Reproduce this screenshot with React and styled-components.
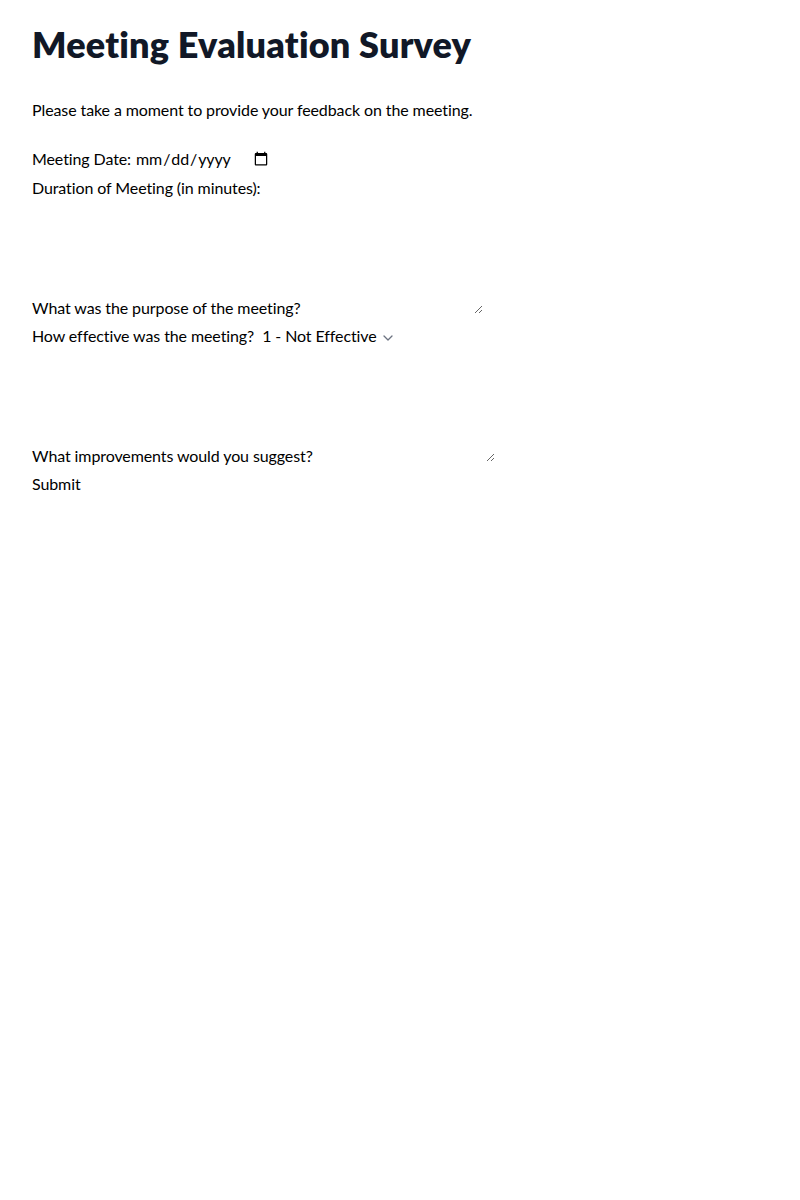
import React, { useState } from "react";
import styled, { createGlobalStyle } from "styled-components";

const GlobalStyle = createGlobalStyle`
  *, *::before, *::after {
    box-sizing: border-box;
    border-width: 0;
    border-style: solid;
  }
  html, body {
    margin: 0;
    padding: 0;
    background: #ffffff;
  }
  body {
    font-family: Lato, "Open Sans", sans-serif;
    font-size: 16px;
    line-height: 1.5;
    color: #000000;
    font-variant-ligatures: none;
    letter-spacing: -0.1px;
  }
`;

const Page = styled.div`
  padding: 24px 32px;
  max-width: 800px;
`;

const Title = styled.h1`
  margin: 0 0 32px;
  font-size: 36px;
  line-height: 40px;
  font-weight: 800;
  letter-spacing: 0.2px;
  color: #111827;
`;

const Intro = styled.p`
  margin: 0 0 20px;
  line-height: 28px;
`;

const Form = styled.form`
  line-height: 28px;
`;

const Field = styled.div`
  display: block;
`;

const Label = styled.label`
  margin-right: 4px;
`;

const controlBase = `
  font: inherit;
  line-height: inherit;
  letter-spacing: inherit;
  color: inherit;
  margin: 0;
  padding: 0;
  border: 0;
  background: transparent;
  outline: none;
`;

const Input = styled.input`
  ${controlBase}
  width: ${(p) => p.$width || "auto"};
`;

const TextArea = styled.textarea`
  ${controlBase}
  width: 178px;
  vertical-align: baseline;
`;

const Select = styled.select`
  ${controlBase}
  appearance: none;
  -webkit-appearance: none;
  padding-left: 4px;
  cursor: pointer;
`;

const Chevron = styled.svg`
  width: 20px;
  height: 20px;
  margin-left: 1px;
  vertical-align: middle;
  pointer-events: none;
`;

const SubmitButton = styled.button`
  ${controlBase}
  cursor: pointer;
`;

const ratings = [
  { value: "1", label: "1 - Not Effective" },
  { value: "2", label: "2 - Slightly" },
  { value: "3", label: "3 - Somewhat" },
  { value: "4", label: "4 - Effective" },
  { value: "5", label: "5 - Very" },
];

export default function App() {
  const [rating, setRating] = useState("1");

  return (
    <>
      <GlobalStyle />
      <Page>
        <Title>Meeting Evaluation Survey</Title>
        <Intro>Please take a moment to provide your feedback on the meeting.</Intro>
        <Form onSubmit={(e) => e.preventDefault()}>
          <Field>
            <Label htmlFor="date">Meeting Date:</Label>
            <Input id="date" type="date" $width="136px" />
          </Field>
          <Field>
            <Label htmlFor="duration">Duration of Meeting (in minutes):</Label>
            <Input id="duration" type="number" />
          </Field>
          <Field>
            <Label htmlFor="purpose">What was the purpose of the meeting?</Label>
            <TextArea id="purpose" rows={4} />
          </Field>
          <Field>
            <Label htmlFor="rating">How effective was the meeting?</Label>
            <Select id="rating" value={rating} onChange={(e) => setRating(e.target.value)}>
              {ratings.map((r) => (
                <option key={r.value} value={r.value}>
                  {r.label}
                </option>
              ))}
            </Select>
            <Chevron viewBox="0 0 20 20" fill="none" aria-hidden="true">
              <path
                d="M6 8l4 4 4-4"
                stroke="#6b7280"
                strokeWidth="1.3"
                strokeLinecap="round"
                strokeLinejoin="round"
              />
            </Chevron>
          </Field>
          <Field>
            <Label htmlFor="improve">What improvements would you suggest?</Label>
            <TextArea id="improve" rows={4} />
          </Field>
          <Field>
            <SubmitButton type="submit">Submit</SubmitButton>
          </Field>
        </Form>
      </Page>
    </>
  );
}
